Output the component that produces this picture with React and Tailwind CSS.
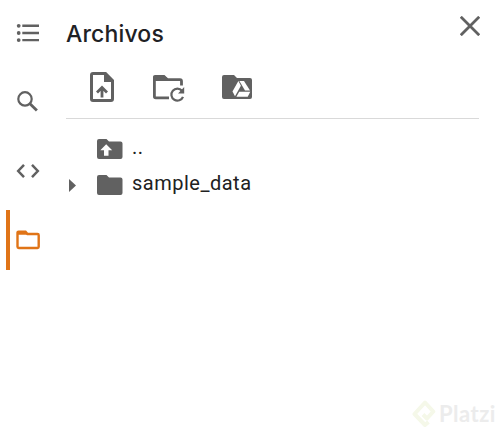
function Icon({ box, className, children }) {
  return (
    <svg viewBox={box} className={`block shrink-0 ${className}`} fill="none" stroke="currentColor" aria-hidden="true">
      {children}
    </svg>
  );
}

function Sidebar() {
  return (
    <nav className="flex w-[60px] shrink-0 flex-col text-[#616161]">
      <div className="flex h-[66px] items-center pl-4">
        <Icon box="0 0 24 24" className="size-6">
          <g fill="currentColor" stroke="none">
            <circle cx="2.7" cy="4.8" r="1.9" />
            <circle cx="2.7" cy="12" r="1.9" />
            <circle cx="2.7" cy="19.1" r="1.9" />
          </g>
          <path d="M6.3 4.8H23M6.3 12H23M6.3 19.1H23" strokeWidth="2.4" />
        </Icon>
      </div>
      <div className="flex h-[72px] items-center pl-4">
        <Icon box="0 0 24 24" className="size-6">
          <circle cx="9" cy="8.9" r="6.7" strokeWidth="2.2" />
          <path d="M13.7 13.4L20.9 20.6" strokeWidth="2.8" />
        </Icon>
      </div>
      <div className="flex h-[66px] items-center pl-4">
        <Icon box="0 0 24 24" className="size-6">
          <path d="M8 5.9L2.2 12L8 18.1M16 5.9L21.8 12L16 18.1" strokeWidth="2.5" />
        </Icon>
      </div>
      <div className="mt-1.5 flex h-[60px] items-center pl-1.5 text-[#e07417]">
        <div className="h-full w-1 bg-[#e07417]" />
        <Icon box="0 0 24 20" className="ml-1.5 h-5 w-6">
          <path d="M2.5 1.6H9.5L11.5 4H21.5Q22.7 4 22.7 5.2V16.8Q22.7 18 21.5 18H2.7Q1.5 18 1.5 16.8V2.6Q1.5 1.6 2.5 1.6Z" strokeWidth="2.4" />
          <path d="M1 1.5H9L12 4.8H1Z" fill="currentColor" stroke="none" />
        </Icon>
      </div>
    </nav>
  );
}

function Toolbar() {
  return (
    <div className="mr-px flex h-[60px] items-start border-b border-[#d9d9d9] pl-6 pt-[13px]">
      <Icon box="0 0 24 30" className="h-[30px] w-6">
        <path d="M3 1.5H15.5L22.5 8.5V27Q22.5 28.5 21 28.5H3Q1.5 28.5 1.5 27V3Q1.5 1.5 3 1.5Z" strokeWidth="3" />
        <path d="M14 1V10H23V8.5L15.5 1Z" fill="currentColor" stroke="none" />
        <path d="M12 25.5V16.5M7 20.5L12 15.5L17 20.5" strokeWidth="2.8" />
      </Icon>
      <Icon box="0 0 32 28" className="ml-[39px] mt-[3px] h-7 w-8">
        <path d="M16 22.9H2.8Q1.4 22.9 1.4 21.5V3H12L14.5 4.7H27Q28.5 4.7 28.5 6.2V10.5" strokeWidth="2.8" />
        <path d="M0 2Q0 0 2 0H11.5L15 3.5V6H1Z" fill="currentColor" stroke="none" />
        <path d="M29 15.8A6 6 0 1 0 30 21.8" strokeWidth="2.2" />
        <path d="M31.2 12V18.4H25Z" fill="currentColor" stroke="none" />
      </Icon>
      <Icon box="0 0 30 24" className="ml-[37px] mt-[3px] h-6 w-[30px]">
        <path d="M2 0H12L15 3H28Q30 3 30 5V22Q30 24 28 24H2Q0 24 0 22V2Q0 0 2 0Z" fill="currentColor" stroke="none" />
        <g fill="#fff" stroke="none">
          <path d="M16.4 6L18.9 10.7L13 21.3L10.5 16.6Z" />
          <path d="M17.4 6H22L28 15.5H23Z" />
          <path d="M17.2 16.7H28.3L25.7 21.7H14.4Z" />
        </g>
      </Icon>
    </div>
  );
}

function Files() {
  return (
    <div className="font-[Roboto,sans-serif] text-[20px] text-[#212121]">
      <div className="flex h-9 items-center">
        <Icon box="0 0 26 20" className="ml-[31px] mr-[9px] h-5 w-[26px] text-[#616161]">
          <path d="M2 0H9.5L12 2.5H23.5Q25.5 2.5 25.5 4.5V18Q25.5 20 23.5 20H2Q0 20 0 18V2Q0 0 2 0Z" fill="currentColor" stroke="none" />
          <path d="M9.2 5.3L15.2 11.2H11.5V16.8H7V11.2H3.3Z" fill="#fff" stroke="none" />
        </Icon>
        <span className="-mt-1 tracking-[0.5px]">..</span>
      </div>
      <div className="flex h-9 items-center">
        <Icon box="0 0 7 13" className="ml-[3px] h-[13px] w-[7px] text-[#616161]">
          <path d="M0 0L7 6.5L0 13Z" fill="currentColor" stroke="none" />
        </Icon>
        <Icon box="0 0 26 20" className="ml-[21px] mr-[9px] h-5 w-[26px] text-[#616161]">
          <path d="M2 0H9.5L12 2.5H23.5Q25.5 2.5 25.5 4.5V18Q25.5 20 23.5 20H2Q0 20 0 18V2Q0 0 2 0Z" fill="currentColor" stroke="none" />
        </Icon>
        <span className="-mt-1 tracking-[0.5px]">sample_data</span>
      </div>
    </div>
  );
}

export default function App() {
  return (
    <main className="relative flex h-[432px] w-[500px] overflow-hidden bg-white">
      <Sidebar />
      <section className="ml-1.5 w-[414px] text-[#616161]">
        <header className="flex h-[59px] items-start justify-between">
          <h1 className="mt-[18px] font-[Inter,sans-serif] text-[23px] leading-8 font-medium tracking-[0.15px] text-[#202124]">Archivos</h1>
          <Icon box="0 0 20 20" className="mt-4 size-5">
            <path d="M0.8 0.8L19.2 19.2M19.2 0.8L0.8 19.2" strokeWidth="2.8" />
          </Icon>
        </header>
        <Toolbar />
        <div className="pt-3">
          <Files />
        </div>
      </section>
      <div className="absolute top-[400px] left-[412px] flex items-center">
        <Icon box="0 0 24 28" className="h-7 w-6 text-[#f5f8e9]">
          <path d="M16.5 22L13 25L2.5 14L13 2.5L21.3 11.5L15 18.5L11 14.5" strokeWidth="4" strokeLinejoin="round" />
        </Icon>
        <span className="ml-[3px] font-[Lato,sans-serif] text-[22px] leading-7 font-bold tracking-[0.5px] text-[#ececec]">Platzi</span>
      </div>
    </main>
  );
}
